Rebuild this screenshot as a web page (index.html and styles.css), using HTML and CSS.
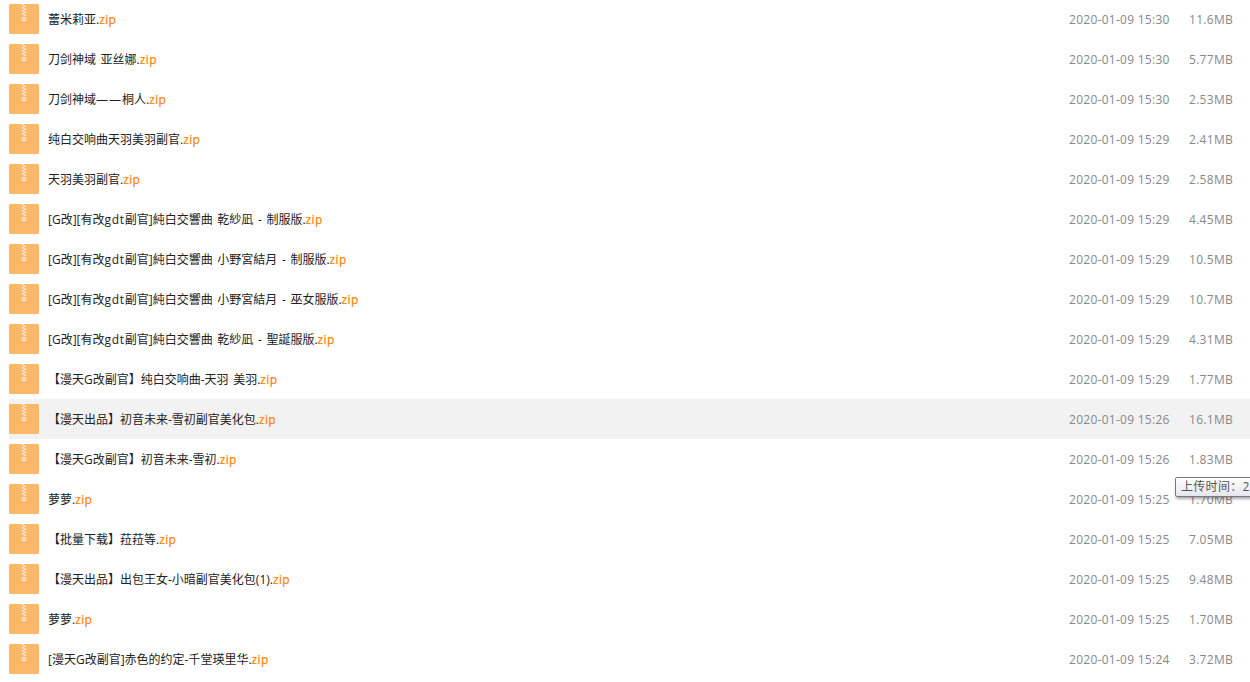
FILE: index.html
```html
<!DOCTYPE html>
<html lang="zh-CN">
<head>
<meta charset="utf-8">
<title>文件列表</title>
<link rel="stylesheet" href="styles.css">
</head>
<body>
<svg class="defs" width="0" height="0" aria-hidden="true">
  <symbol id="zip" viewBox="0 0 30 30">
    <rect width="30" height="30" rx="1.5" fill="#fbb868"/>
    <path d="M13 0h2v1.500h-2zM15 1.500h2v1.500h-2zM13 3h2v1.500h-2zM15 4.500h2v1.500h-2zM13 6h2v1.500h-2zM15 7.500h2v1.500h-2zM13 9h2v1.500h-2zM15 10.500h2v1.500h-2z" fill="#feeedb"/>
    <path d="M13 13h4v4h-4z M14 14.500v1.500h2v-1.500z" fill="#feeedb" fill-rule="evenodd"/>
  </symbol>
</svg>
<ul class="list">
  <li class="row"><svg class="icon"><use href="#zip"/></svg><span class="name">蕾米莉亚.<em>zip</em></span><span class="date">2020-01-09 15:30</span><span class="size">11.6MB</span></li>
  <li class="row"><svg class="icon"><use href="#zip"/></svg><span class="name">刀剑神域 亚丝娜.<em>zip</em></span><span class="date">2020-01-09 15:30</span><span class="size">5.77MB</span></li>
  <li class="row"><svg class="icon"><use href="#zip"/></svg><span class="name">刀剑神域<span class="wide">——</span>桐人.<em>zip</em></span><span class="date">2020-01-09 15:30</span><span class="size">2.53MB</span></li>
  <li class="row"><svg class="icon"><use href="#zip"/></svg><span class="name">纯白交响曲天羽美羽副官.<em>zip</em></span><span class="date">2020-01-09 15:29</span><span class="size">2.41MB</span></li>
  <li class="row"><svg class="icon"><use href="#zip"/></svg><span class="name">天羽美羽副官.<em>zip</em></span><span class="date">2020-01-09 15:29</span><span class="size">2.58MB</span></li>
  <li class="row"><svg class="icon"><use href="#zip"/></svg><span class="name">[G改][有改<span class="latin">gdt</span>副官]純白交響曲 乾紗凪 - 制服版.<em>zip</em></span><span class="date">2020-01-09 15:29</span><span class="size">4.45MB</span></li>
  <li class="row"><svg class="icon"><use href="#zip"/></svg><span class="name">[G改][有改<span class="latin">gdt</span>副官]純白交響曲 小野宮結月 - 制服版.<em>zip</em></span><span class="date">2020-01-09 15:29</span><span class="size">10.5MB</span></li>
  <li class="row"><svg class="icon"><use href="#zip"/></svg><span class="name">[G改][有改<span class="latin">gdt</span>副官]純白交響曲 小野宮結月 - 巫女服版.<em>zip</em></span><span class="date">2020-01-09 15:29</span><span class="size">10.7MB</span></li>
  <li class="row"><svg class="icon"><use href="#zip"/></svg><span class="name">[G改][有改<span class="latin">gdt</span>副官]純白交響曲 乾紗凪 - 聖誕服版.<em>zip</em></span><span class="date">2020-01-09 15:29</span><span class="size">4.31MB</span></li>
  <li class="row"><svg class="icon"><use href="#zip"/></svg><span class="name">【漫天G改副官】纯白交响曲-天羽 美羽.<em>zip</em></span><span class="date">2020-01-09 15:29</span><span class="size">1.77MB</span></li>
  <li class="row hover"><svg class="icon"><use href="#zip"/></svg><span class="name">【漫天出品】初音未来-雪初副官美化包.<em>zip</em></span><span class="date">2020-01-09 15:26</span><span class="size">16.1MB</span></li>
  <li class="row"><svg class="icon"><use href="#zip"/></svg><span class="name">【漫天G改副官】初音未来-雪初.<em>zip</em></span><span class="date">2020-01-09 15:26</span><span class="size">1.83MB</span></li>
  <li class="row"><svg class="icon"><use href="#zip"/></svg><span class="name">萝萝.<em>zip</em></span><span class="date">2020-01-09 15:25</span><span class="size">1.70MB</span><div class="tooltip">上传时间：2020-01-09 15:25</div></li>
  <li class="row"><svg class="icon"><use href="#zip"/></svg><span class="name">【批量下载】菈菈等.<em>zip</em></span><span class="date">2020-01-09 15:25</span><span class="size">7.05MB</span></li>
  <li class="row"><svg class="icon"><use href="#zip"/></svg><span class="name">【漫天出品】出包王女-小暗副官美化包(1).<em>zip</em></span><span class="date">2020-01-09 15:25</span><span class="size">9.48MB</span></li>
  <li class="row"><svg class="icon"><use href="#zip"/></svg><span class="name">萝萝.<em>zip</em></span><span class="date">2020-01-09 15:25</span><span class="size">1.70MB</span></li>
  <li class="row"><svg class="icon"><use href="#zip"/></svg><span class="name">[漫天G改副官]赤色的约定-千堂瑛里华.<em>zip</em></span><span class="date">2020-01-09 15:24</span><span class="size">3.72MB</span></li>
</ul>
</body>
</html>
```
FILE: styles.css
```css
html, body {
  margin: 0;
  height: 100%;
  overflow: hidden;
  background: #fff;
}
body {
  font-family: "Open Sans", "Noto Sans CJK SC", sans-serif;
  font-size: 12px;
}
.defs {
  position: absolute;
}
.list {
  list-style: none;
  margin: -1px 0 0 9px;
  padding: 0;
}
.row {
  position: relative;
  display: flex;
  align-items: center;
  height: 40px;
}
.hover {
  background: #f2f2f2;
}
.icon {
  width: 30px;
  height: 30px;
  flex: none;
  margin-right: 9px;
}
.name {
  flex: 1;
  color: #222;
  white-space: nowrap;
  word-spacing: 1.5px;
}
.name em {
  font-style: normal;
  color: #ff7f00;
  letter-spacing: .35px;
  -webkit-text-stroke: .2px #ff7f00;
}
.wide {
  letter-spacing: 1px;
}
.latin {
  letter-spacing: .7px;
}
.date {
  width: 120px;
  color: #888;
  white-space: nowrap;
  letter-spacing: .27px;
}
.size {
  width: 61px;
  color: #888;
  white-space: nowrap;
  letter-spacing: .3px;
}
.tooltip {
  position: absolute;
  left: 1166px;
  top: -2px;
  height: 20px;
  padding: 0 5px;
  box-sizing: border-box;
  line-height: 18px;
  white-space: nowrap;
  font-family: "Open Sans", "Noto Sans CJK TC", sans-serif;
  letter-spacing: .3px;
  color: #555;
  background: linear-gradient(#fff, #e6e6ee);
  border: 1px solid #77778a;
  border-radius: 2px;
  box-shadow: 1px 2px 3px rgba(0, 0, 0, .35);
}
```
